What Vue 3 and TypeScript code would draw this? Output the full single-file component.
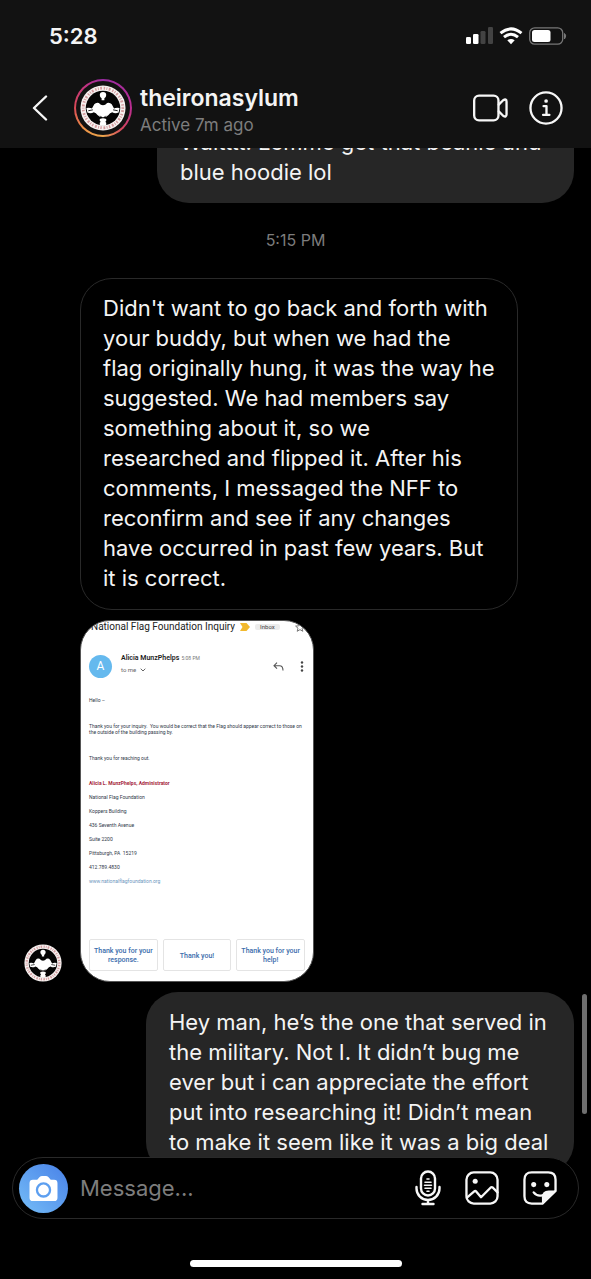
<script setup lang="ts">
import { ref } from 'vue'

const draft = ref('')

const sentTop = 'Waitttt! Lemme get that beanie and\nblue hoodie lol'
const received = [
  "Didn't want to go back and forth with",
  'your buddy, but when we had the',
  'flag originally hung, it was the way he',
  'suggested. We had members say',
  'something about it, so we',
  'researched and flipped it. After his',
  'comments, I messaged the NFF to',
  'reconfirm and see if any changes',
  'have occurred in past few years. But',
  'it is correct.',
].join('\n')
const sentBottom = [
  'Hey man, he’s the one that served in',
  'the military. Not I. It didn’t bug me',
  'ever but i can appreciate the effort',
  'put into researching it! Didn’t mean',
  'to make it seem like it was a big deal',
].join('\n')

const signature: string[] = [
  'National Flag Foundation',
  'Koppers Building',
  '436 Seventh Avenue',
  'Suite 2200',
  'Pittsburgh, PA\u00a0 15219',
  '412.789.4830',
]
const replies: string[] = ['Thank you for your response.', 'Thank you!', 'Thank you for your help!']
</script>

<template>
  <div class="screen">
    <svg class="defs" width="0" height="0" aria-hidden="true">
      <symbol id="logo" viewBox="0 0 100 100">
        <circle cx="50" cy="50" r="49" fill="#f6f1f0" />
        <circle cx="50" cy="50" r="43" fill="none" stroke="#b8565c" stroke-width="6" stroke-dasharray="2 3 4 4 3 3" opacity=".55" />
        <circle cx="50" cy="50" r="37.500" fill="#050505" />
        <path
          fill="#fff"
          d="M43 22q0-7 7-7t7 7q0 5-4 7v4h-6v-4q-4-2-4-7zM14 50q8-1 12 1l5-9q4-5 10-3 4 5 9 5t9-5q6-2 10 3l5 9q4-2 12-1l-2 10q-8 3-14-1-5 1-8 6-4 5-12 5t-12-5q-3-5-8-6-6 4-14 1zM43 74q7-3 14 0v4l-2 2 2 2v5q-7 3-14 0v-5l2-2-2-2z"
        />
        <path d="M18 56l10-2M82 56l-10-2M44 67l3 3M56 67l-3 3" stroke="#111" stroke-width="2" />
      </symbol>
    </svg>

    <header class="top">
      <div class="status">
        <span class="clock">5:28</span>
        <svg class="indicators" width="102" height="18" viewBox="0 0 102 18" aria-hidden="true">
          <rect x="0" y="10" width="5" height="7" rx="1.300" fill="#fff" />
          <rect x="7" y="7" width="5.500" height="10" rx="1.300" fill="#fff" />
          <rect x="14.500" y="4" width="5" height="13" rx="1.300" fill="#434343" />
          <rect x="22" y="0" width="5" height="17" rx="1.300" fill="#434343" />
          <g fill="none" stroke="#fff" stroke-width="3">
            <path d="M34.500 6.200q10.500-8.600 21 0" />
            <path d="M38 10.200q7-5.800 14 0" />
          </g>
          <path d="M41.300 13.300q3.700-2.800 7.400 0L45 17.200z" fill="#fff" />
          <rect x="63.700" y=".8" width="33" height="16.400" rx="5" fill="none" stroke="#777" stroke-width="1.300" />
          <rect x="66" y="3" width="18.500" height="12" rx="2.500" fill="#fff" />
          <path d="M98.500 6.500q2.500 2 0 5.500z" fill="#777" stroke="#777" />
        </svg>
      </div>
      <div class="bar">
        <button class="icon back" type="button" aria-label="Back">
          <svg width="16" height="26" viewBox="0 0 16 26"><path d="M14 1.500 2 13l12 11.500" /></svg>
        </button>
        <a class="profile" href="#profile">
          <span class="ring"><svg class="face" viewBox="0 0 100 100" aria-hidden="true"><use href="#logo" /></svg></span>
          <span class="who">
            <strong>theironasylum</strong>
            <small>Active 7m ago</small>
          </span>
        </a>
        <button class="icon" type="button" aria-label="Video call">
          <svg width="35" height="28" viewBox="0 0 36 28">
            <rect x="1.200" y="1.200" width="25" height="25.600" rx="5" />
            <path d="M26.500 10.500 31 6q3.500-2 3.500 1.500v13q0 3.500-3.500 1.500l-4.500-4.500" />
          </svg>
        </button>
        <button class="icon" type="button" aria-label="Details">
          <svg width="34" height="34" viewBox="0 0 35 35">
            <circle cx="17.500" cy="17.500" r="16" />
            <path d="M15 15.500h3v9M14.500 24.500h6.500" />
            <circle cx="17.600" cy="10.300" r="1.900" class="solid" />
          </svg>
        </button>
      </div>
    </header>

    <main class="thread">
      <div class="messages">
        <p class="bubble sent first">{{ sentTop }}</p>
        <time class="stamp">5:15 PM</time>
        <p class="bubble received">{{ received }}</p>
        <div class="row">
          <svg class="avatar" viewBox="0 0 100 100" aria-hidden="true"><use href="#logo" /></svg>
          <article class="mail">
            <div class="subject">
              <span class="title">National Flag Foundation Inquiry</span>
              <svg width="10" height="8" viewBox="0 0 10 8" aria-hidden="true"><path d="M0 0h6.500L10 4 6.500 8H0l2.500-4z" fill="#f2b92e" /></svg>
              <span class="tag">Inbox</span>
              <svg class="star" width="10" height="10" viewBox="0 0 10 10" aria-hidden="true"><path d="M5 .8 6.200 3.800l3.200.3L7 6.200l.8 3.100L5 7.600 2.200 9.300 3 6.200.6 4.100l3.200-.3z" fill="none" stroke="#777" /></svg>
            </div>
            <div class="sender">
              <span class="initial">A</span>
              <div class="from">
                <div><b>Alicia MunzPhelps</b> <span class="time">5:08 PM</span></div>
                <div class="to">to me <svg width="6" height="4" viewBox="0 0 6 4" aria-hidden="true"><path d="M.7.700 3 3 5.300.7" fill="none" stroke="#666" /></svg></div>
              </div>
              <svg width="11" height="9" viewBox="0 0 11 9" aria-hidden="true"><path d="M4 .700 1 3.700l3 3M1 3.700h5.500Q10 3.700 10 8.500" fill="none" stroke="#555" stroke-width="1.100" /></svg>
              <svg width="4" height="11" viewBox="0 0 4 11" aria-hidden="true"><g fill="#444"><circle cx="2" cy="1.500" r="1.200" /><circle cx="2" cy="5.500" r="1.200" /><circle cx="2" cy="9.500" r="1.200" /></g></svg>
            </div>
            <div class="letter">
              <p>Hello –</p>
              <p>Thank you for your inquiry.&nbsp; You would be correct that the Flag should appear correct to those on the outside of the building passing by.</p>
              <p>Thank you for reaching out.</p>
            </div>
            <div class="signature">
              <b>Alicia L. MunzPhelps, Administrator</b>
              <span v-for="line in signature" :key="line">{{ line }}</span>
              <a href="#site">www.nationalflagfoundation.org</a>
            </div>
            <div class="replies">
              <button v-for="reply in replies" :key="reply" type="button">{{ reply }}</button>
            </div>
          </article>
        </div>
        <p class="bubble sent">{{ sentBottom }}</p>
      </div>
      <span class="scrollbar"></span>
    </main>

    <footer class="bottom">
      <form class="composer" @submit.prevent>
        <button class="camera" type="button" aria-label="Camera">
          <svg width="29" height="27" viewBox="0 0 30 28" aria-hidden="true">
            <path d="M5 5h3.500L11 2q1-1 2.500-1h4Q19 1 20 2l2.500 3H26q3.500 0 3.500 3.500v15Q29.500 27 26 27H4Q.5 27 .5 23.500v-15Q.5 5 4 5z" fill="#fff" />
            <circle cx="15" cy="15.500" r="6.800" fill="none" stroke="#5d9ff0" stroke-width="2.400" />
          </svg>
        </button>
        <input v-model="draft" type="text" placeholder="Message..." aria-label="Message" />
        <button class="icon" type="button" aria-label="Voice message">
          <svg width="26" height="36" viewBox="0 0 26 36">
            <rect x="6" y="1.500" width="14" height="24" rx="7" />
            <path d="M1.500 17v1.500a11.500 11.500 0 0 0 23 0V17M13 30v4M7.500 34h11" />
            <path class="thin" d="M12 9h2M10 12.200h6M9.500 15.200h7M10 18.200h6M12 21.200h2" />
          </svg>
        </button>
        <button class="icon" type="button" aria-label="Photo library">
          <svg width="34" height="34" viewBox="0 0 35 35">
            <rect x="1.500" y="1.500" width="32" height="32" rx="7.500" />
            <circle cx="10.500" cy="10.500" r="2.600" class="solid" />
            <path d="M2 27.500 9.500 21q1-.8 2 0l5 6L26.500 17q1-.8 2 0l5 5" />
          </svg>
        </button>
        <button class="icon" type="button" aria-label="Stickers">
          <svg width="34" height="34" viewBox="0 0 35 35">
            <path d="M19.500 33.500H9Q1.500 33.500 1.500 26V9Q1.500 1.500 9 1.500h17q7.500 0 7.500 7.500v11.500L20 33.500z" />
            <path class="solid" d="M19.500 33.500V27q0-7 7-7h7z" />
            <circle cx="11" cy="14" r="2.600" class="solid" />
            <circle cx="24.500" cy="14" r="2.600" class="solid" />
            <path d="M11 22q3.500 4.500 9 3" />
          </svg>
        </button>
      </form>
      <span class="home"></span>
    </footer>
  </div>
</template>

<style>
html,
body {
  background: #000;
}
</style>

<style scoped>
.screen {
  box-sizing: border-box;
  display: flex;
  flex-direction: column;
  height: 100vh;
  overflow: hidden;
  background: #000;
  color: #f4f4f4;
  font-family: Inter, 'Liberation Sans', sans-serif;
}
.screen * {
  box-sizing: border-box;
}
.defs {
  position: absolute;
}
button {
  padding: 0;
  border: 0;
  background: none;
  font: inherit;
  color: inherit;
}
svg {
  display: block;
  flex: none;
}
.icon svg {
  fill: none;
  stroke: #f7f7f7;
  stroke-width: 2.4;
  stroke-linecap: round;
  stroke-linejoin: round;
}
.icon .solid {
  fill: #f7f7f7;
  stroke: none;
}
.icon .thin {
  stroke-width: 1.6;
}

.top {
  flex: none;
  background: #121212;
}
.status {
  display: flex;
  justify-content: space-between;
  align-items: center;
  height: 72px;
  padding: 0 23px 0 49px;
}
.clock {
  font-size: 22px;
  font-weight: 600;
}
.bar {
  display: flex;
  align-items: center;
  gap: 21px;
  height: 76px;
  padding: 0 28px 4px 32px;
}
.back {
  margin-right: 5px;
}
.profile {
  flex: 1;
  display: flex;
  align-items: center;
  gap: 8px;
  color: inherit;
  text-decoration: none;
}
.ring {
  display: flex;
  align-items: center;
  justify-content: center;
  width: 58px;
  height: 58px;
  border: 2px solid transparent;
  border-radius: 50%;
  background:
    linear-gradient(#121212, #121212) padding-box,
    conic-gradient(#9a2ca4, #b92d91 25%, #d4455f 38%, #eda64c 50%, #ed9348 62%, #d94a55 75%, #c13284 90%, #9a2ca4) border-box;
}
.face {
  width: 46px;
  height: 46px;
}
.who {
  display: flex;
  flex-direction: column;
  padding-top: 4px;
}
.who strong {
  font-size: 23px;
  line-height: 30px;
  font-weight: 600;
}
.who small {
  font-size: 17px;
  line-height: 24px;
  color: #7d7d7d;
}

.thread {
  position: relative;
  flex: 1;
  min-height: 0;
  display: flex;
  flex-direction: column;
  justify-content: flex-end;
  overflow: hidden;
}
.messages {
  display: flex;
  flex-direction: column;
  padding: 0 17px;
}
.bubble {
  margin: 0;
  border-radius: 32px;
  font-size: 22px;
  line-height: 30px;
  white-space: pre;
}
.sent {
  align-self: flex-end;
  width: 428px;
  max-width: 100%;
  padding: 15px 23px 17px;
  background: #262626;
}
.first {
  width: 417px;
  padding: 16px 23px;
}
.received {
  align-self: flex-start;
  width: 438px;
  margin-left: 63px;
  padding: 14px 22px 16px;
  border: 1px solid #292929;
}
.stamp {
  align-self: center;
  padding: 25px 0 26px;
  font-size: 16px;
  line-height: 24px;
  color: #7c7c7c;
}
.row {
  display: flex;
  align-items: flex-end;
  gap: 18px;
  margin: 10px 0 10px 7px;
}
.avatar {
  width: 38px;
  height: 38px;
}
.scrollbar {
  position: absolute;
  right: 4px;
  bottom: 60px;
  width: 5px;
  height: 120px;
  border-radius: 3px;
  background: #6f6f6f;
}

.mail {
  display: flex;
  flex-direction: column;
  width: 234px;
  height: 362px;
  padding: 0 8px 10px;
  border: 1px solid #555;
  border-radius: 30px;
  overflow: hidden;
  background: #fff;
  color: #303848;
  font-family: Roboto, sans-serif;
  font-size: 5px;
  line-height: 6px;
}
.subject {
  display: flex;
  align-items: center;
  gap: 5px;
  height: 12px;
  padding-left: 2px;
  color: #222;
}
.title {
  font-size: 10px;
  line-height: 12px;
  white-space: nowrap;
}
.tag {
  padding: 0 5px;
  border-radius: 2px;
  background: #ececec;
  color: #444;
  font-size: 6px;
}
.star {
  margin-left: auto;
}
.sender {
  display: flex;
  align-items: center;
  gap: 16px;
  margin-top: 21px;
  padding-right: 1px;
  height: 24px;
}
.initial {
  width: 23px;
  height: 23px;
  border-radius: 50%;
  background: #65b9ee;
  color: #fff;
  font-size: 12px;
  line-height: 23px;
  text-align: center;
}
.from {
  flex: 1;
  margin-left: -7px;
  line-height: 11px;
  padding-bottom: 4px;
}
.from b {
  font-size: 7px;
  font-weight: 600;
  color: #222;
}
.time {
  margin-left: 1px;
  color: #777;
}
.to {
  display: flex;
  align-items: center;
  gap: 4px;
  font-size: 6px;
  color: #666;
}
.letter {
  margin-top: 19px;
}
.letter p {
  margin: 0 0 20px;
}
.signature {
  display: flex;
  flex-direction: column;
  align-items: flex-start;
  margin-top: -5px;
  line-height: 14px;
}
.signature b {
  color: #a51f3b;
}
.signature a {
  color: #6d96bd;
  text-decoration: none;
}
.replies {
  display: grid;
  grid-template-columns: repeat(3, 1fr);
  gap: 5px;
  height: 32px;
  margin-top: auto;
}
.replies button {
  padding: 2px 3px 0;
  border: 1px solid #e4e4e4;
  border-radius: 2px;
  color: #3a6cab;
  font-size: 7px;
  font-weight: 500;
  line-height: 9px;
}

.bottom {
  position: relative;
  flex: none;
  display: flex;
  flex-direction: column;
  margin-top: -17px;
  padding: 0 12px 12px;
}
.composer {
  display: flex;
  align-items: center;
  gap: 24px;
  height: 62px;
  padding: 0 21px 0 6px;
  border: 1px solid #292929;
  border-radius: 31px;
  background: #000;
}
.camera {
  display: flex;
  align-items: center;
  justify-content: center;
  width: 49px;
  height: 49px;
  margin-right: -12px;
  border-radius: 50%;
  background: linear-gradient(45deg, #75bdf7, #4881e8);
}
.composer input {
  flex: 1;
  min-width: 0;
  padding: 0;
  border: 0;
  outline: 0;
  background: none;
  color: #f4f4f4;
  font: inherit;
  font-size: 22px;
}
.composer input::placeholder {
  color: #7d7d7d;
  opacity: 1;
}
.home {
  align-self: center;
  width: 212px;
  height: 7px;
  margin-top: 41px;
  border-radius: 4px;
  background: #fff;
}
</style>
